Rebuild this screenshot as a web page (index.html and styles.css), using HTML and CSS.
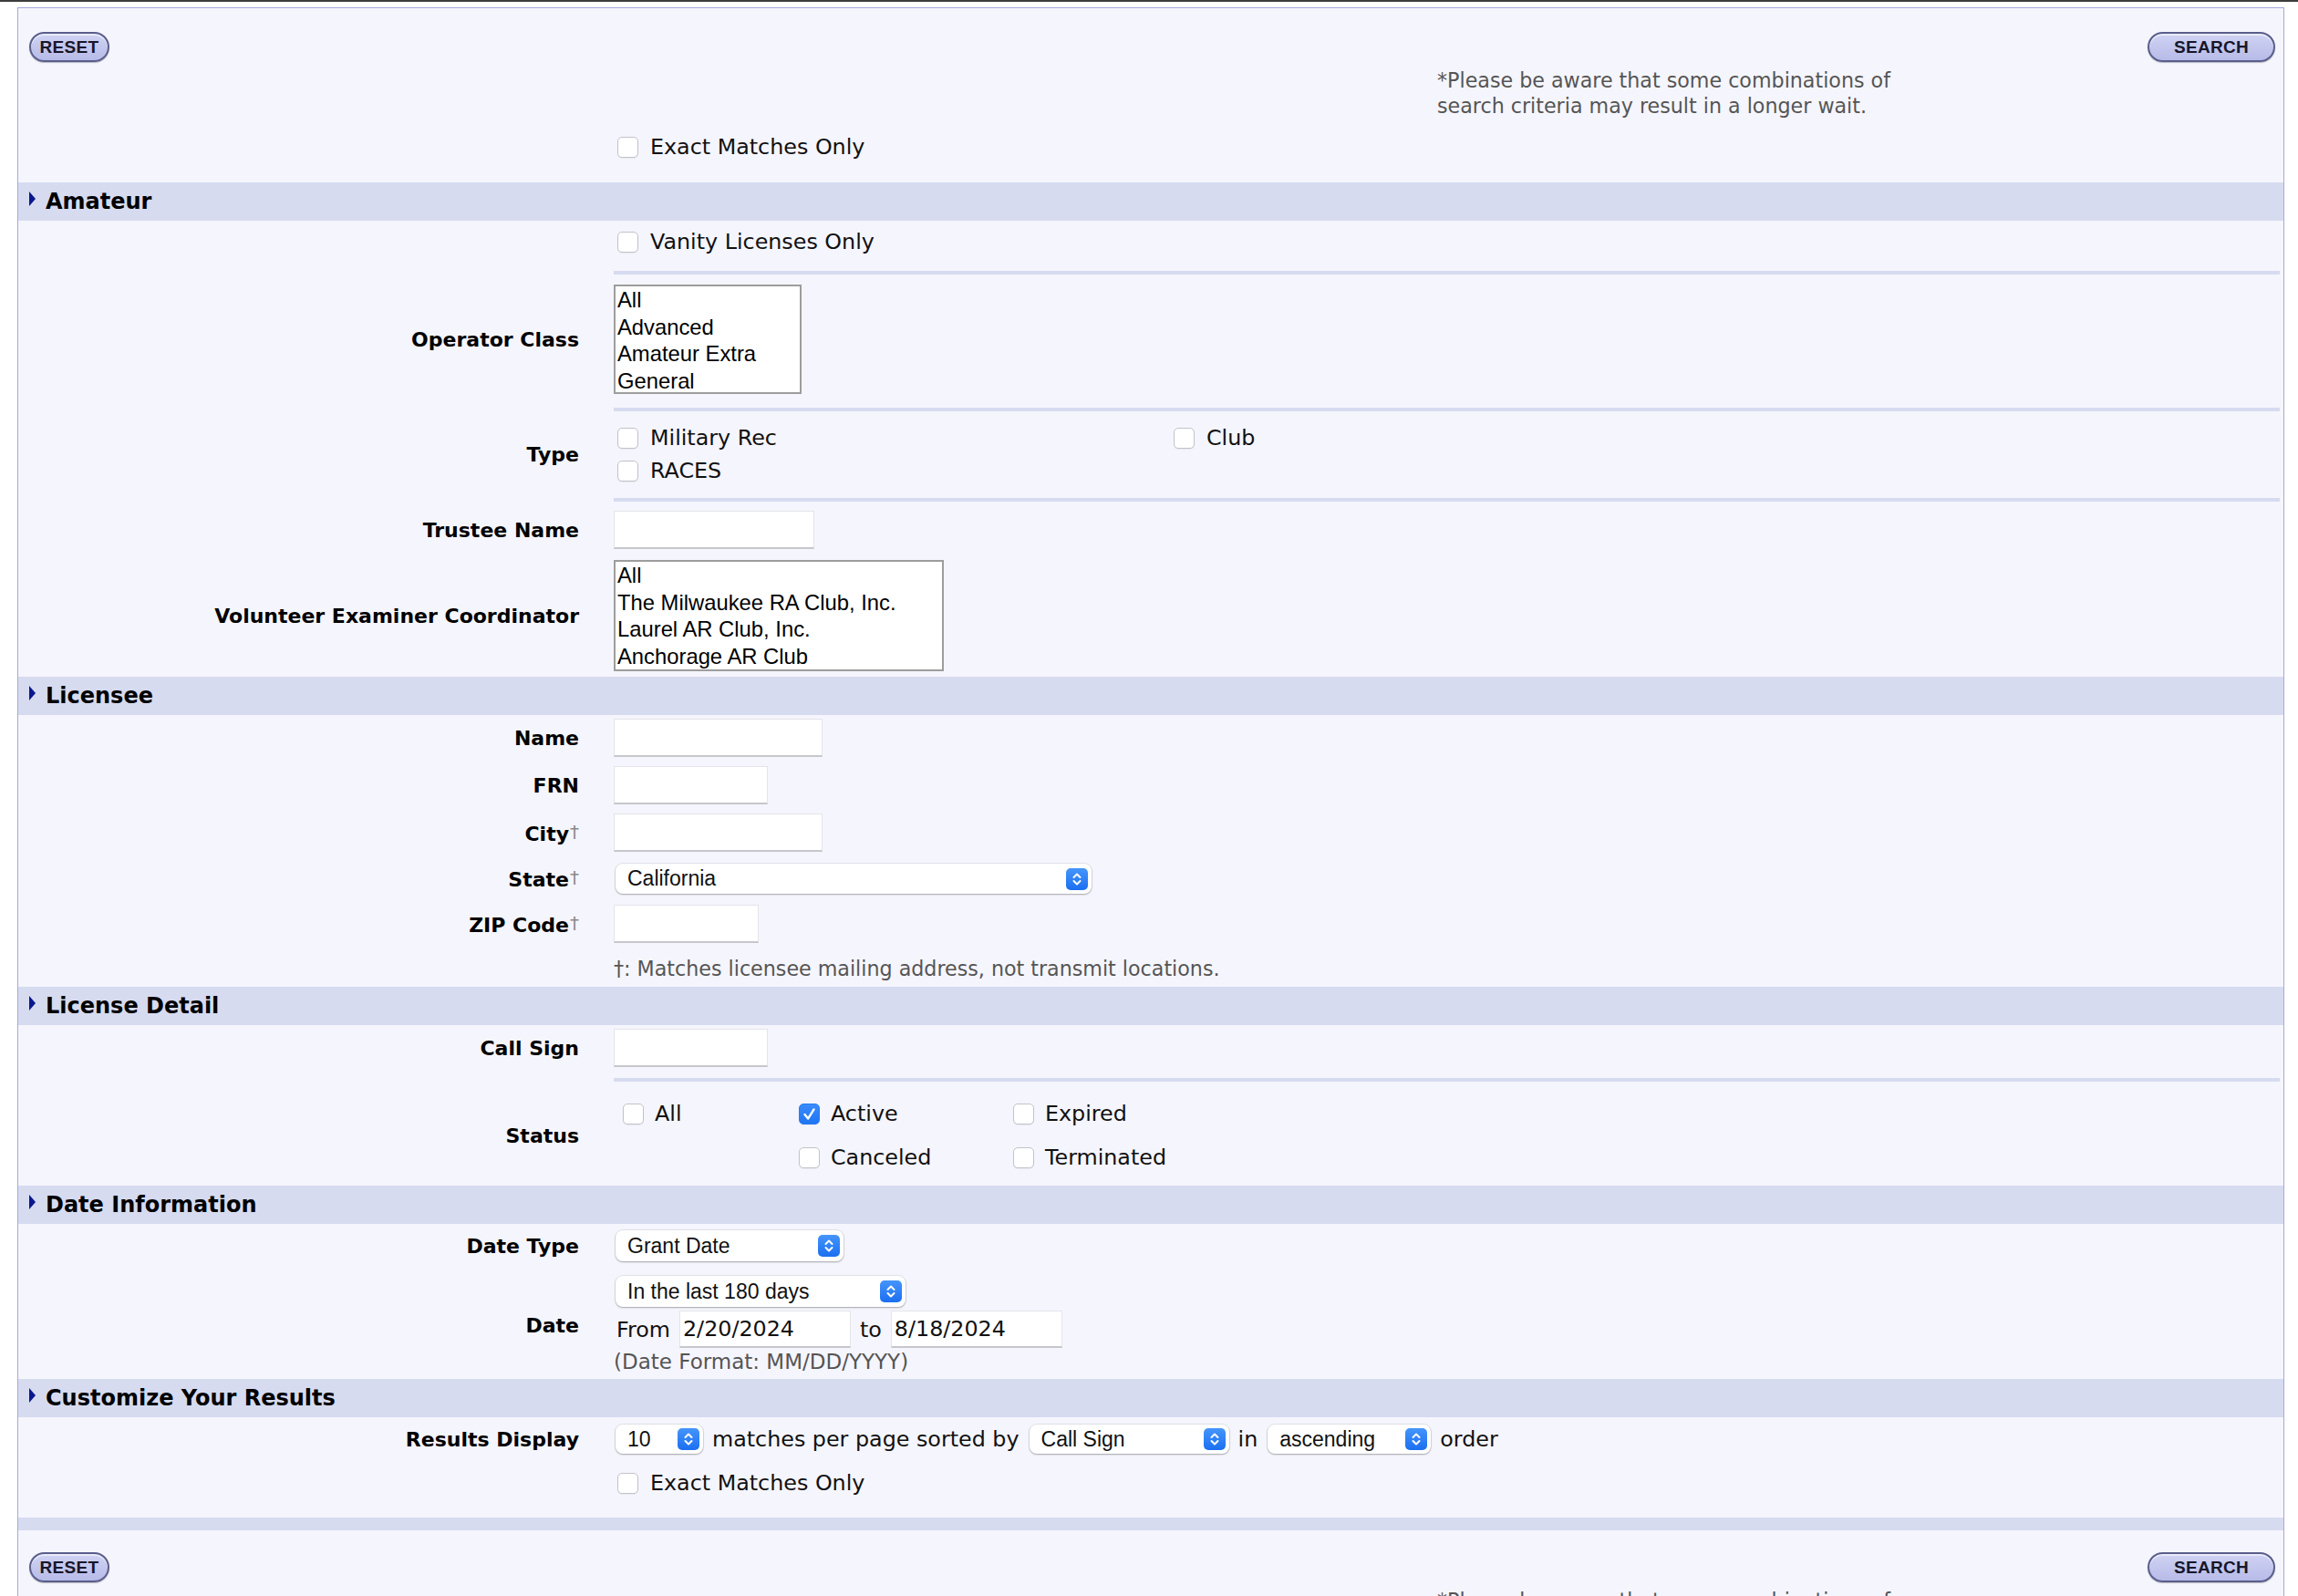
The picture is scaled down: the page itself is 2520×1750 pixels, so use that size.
FILE: index.html
```html
<!DOCTYPE html>
<html>
<head>
<meta charset="utf-8">
<title>License Search</title>
<link rel="stylesheet" href="styles.css">
</head>
<body>
<div class="topline"></div>
<div class="panel">
  <div class="actions">
    <button class="pill reset">RESET</button>
    <button class="pill search">SEARCH</button>
  </div>
  <p class="note">*Please be aware that some combinations of<br>search criteria may result in a longer wait.</p>
  <div class="row h40 mt11">
    <div class="lbl"></div>
    <label class="chk"><span class="cb"></span>Exact Matches Only</label>
  </div>

  <div class="band mt19"><span class="tri"></span>Amateur</div>
  <div class="row h46">
    <div class="lbl"></div>
    <label class="chk"><span class="cb"></span>Vanity Licenses Only</label>
  </div>
  <div class="sep mt9"></div>
  <div class="row mt11">
    <div class="lbl">Operator Class</div>
    <div class="listbox lb-op">
      <div>All</div><div>Advanced</div><div>Amateur Extra</div><div>General</div>
    </div>
  </div>
  <div class="sep mt15"></div>
  <div class="row mt11">
    <div class="lbl">Type</div>
    <div class="type-grid">
      <label class="chk"><span class="cb"></span>Military Rec</label>
      <label class="chk"><span class="cb"></span>Club</label>
      <label class="chk"><span class="cb"></span>RACES</label>
    </div>
  </div>
  <div class="sep mt12"></div>
  <div class="row mt10">
    <div class="lbl">Trustee Name</div>
    <div class="txt w220"></div>
  </div>
  <div class="row mt12">
    <div class="lbl">Volunteer Examiner Coordinator</div>
    <div class="listbox lb-vec">
      <div>All</div><div>The Milwaukee RA Club, Inc.</div><div>Laurel AR Club, Inc.</div><div>Anchorage AR Club</div>
    </div>
  </div>

  <div class="band mt6"><span class="tri"></span>Licensee</div>
  <div class="row mt4">
    <div class="lbl">Name</div>
    <div class="txt w229"></div>
  </div>
  <div class="row mt10">
    <div class="lbl">FRN</div>
    <div class="txt w169"></div>
  </div>
  <div class="row mt10">
    <div class="lbl">City<span class="dag">†</span></div>
    <div class="txt w229"></div>
  </div>
  <div class="row mt13">
    <div class="lbl">State<span class="dag">†</span></div>
    <div class="sel w522"><span>California</span><svg class="step" viewBox="0 0 24 24"><path d="M8.5 10 L12 6.5 L15.5 10 M8.5 14 L12 17.5 L15.5 14"/></svg></div>
  </div>
  <div class="row mt12">
    <div class="lbl">ZIP Code<span class="dag">†</span></div>
    <div class="txt w159"></div>
  </div>
  <div class="row mt14">
    <div class="lbl"></div>
    <div class="hint foot">†: Matches licensee mailing address, not transmit locations.</div>
  </div>

  <div class="band mt6"><span class="tri"></span>License Detail</div>
  <div class="row mt4">
    <div class="lbl">Call Sign</div>
    <div class="txt w169"></div>
  </div>
  <div class="sep mt12"></div>
  <div class="row mt11">
    <div class="lbl">Status</div>
    <div class="status-grid">
      <label class="chk s"><span class="cb"></span>All</label>
      <label class="chk s"><span class="cb on"><svg viewBox="0 0 23 23"><path d="M6 12 L10 17 L17 6"/></svg></span>Active</label>
      <label class="chk s"><span class="cb"></span>Expired</label>
      <span></span>
      <label class="chk s"><span class="cb"></span>Canceled</label>
      <label class="chk s"><span class="cb"></span>Terminated</label>
    </div>
  </div>

  <div class="band mt7"><span class="tri"></span>Date Information</div>
  <div class="row mt7">
    <div class="lbl">Date Type</div>
    <div class="sel w250 h34"><span>Grant Date</span><svg class="step" viewBox="0 0 24 24"><path d="M8.5 10 L12 6.5 L15.5 10 M8.5 14 L12 17.5 L15.5 14"/></svg></div>
  </div>
  <div class="row mt16">
    <div class="lbl">Date</div>
    <div class="datebox">
      <div class="sel w318 h34"><span>In the last 180 days</span><svg class="step" viewBox="0 0 24 24"><path d="M8.5 10 L12 6.5 L15.5 10 M8.5 14 L12 17.5 L15.5 14"/></svg></div>
      <div class="fromto">
        <span class="from">From</span>
        <div class="txt w188 val">2/20/2024</div>
        <span>to</span>
        <div class="txt w188 val">8/18/2024</div>
      </div>
      <div class="hint">(Date Format: MM/DD/YYYY)</div>
    </div>
  </div>

  <div class="band mt5"><span class="tri"></span>Customize Your Results</div>
  <div class="row mt8">
    <div class="lbl">Results Display</div>
    <div class="results">
      <div class="sel w96 h32"><span>10</span><svg class="step" viewBox="0 0 24 24"><path d="M8.5 10 L12 6.5 L15.5 10 M8.5 14 L12 17.5 L15.5 14"/></svg></div>
      <span>matches per page sorted by</span>
      <div class="sel w219 h32 nm"><span>Call Sign</span><svg class="step" viewBox="0 0 24 24"><path d="M8.5 10 L12 6.5 L15.5 10 M8.5 14 L12 17.5 L15.5 14"/></svg></div>
      <span>in</span>
      <div class="sel w179 h32 nm"><span>ascending</span><svg class="step" viewBox="0 0 24 24"><path d="M8.5 10 L12 6.5 L15.5 10 M8.5 14 L12 17.5 L15.5 14"/></svg></div>
      <span>order</span>
    </div>
  </div>
  <div class="row h40 mt12">
    <div class="lbl"></div>
    <label class="chk"><span class="cb"></span>Exact Matches Only</label>
  </div>
  <div class="band thin mt18"></div>

  <div class="actions bottom">
    <button class="pill reset">RESET</button>
    <button class="pill search">SEARCH</button>
  </div>
  <p class="note">*Please be aware that some combinations of<br>search criteria may result in a longer wait.</p>
</div>
</body>
</html>
```
FILE: styles.css
```css
html, body {
  margin: 0;
  padding: 0;
  background: #ffffff;
}
body {
  font-family: "DejaVu Sans", Verdana, sans-serif;
  font-size: 23.8px;
  color: #111;
}
.topline {
  height: 2px;
  background: #3c3c3c;
}
.panel {
  margin: 6px 15px 0 19px;
  border: 1px solid #a4a9dd;
  border-bottom: none;
  background: #f5f5fd;
  padding-bottom: 40px;
}
.actions {
  display: flex;
  justify-content: space-between;
  align-items: flex-start;
  padding: 26px 9px 0 12px;
}
.actions.bottom {
  padding-top: 24px;
}
.pill {
  height: 33px;
  box-sizing: border-box;
  border-radius: 17px;
  border: 2px solid #5a5e8c;
  background: linear-gradient(#d0d3f3, #b7bbe8);
  box-shadow: inset 0 2px 0 rgba(255,255,255,0.55), 0 1px 1px rgba(0,0,0,0.25);
  font-family: "Liberation Sans", Arial, sans-serif;
  font-weight: bold;
  font-size: 19px;
  letter-spacing: 0.3px;
  color: #17172a;
  padding: 0;
  cursor: pointer;
}
.reset { width: 88px; }
.search { width: 140px; }
.note {
  margin: 6px 0 0 1556px;
  font-size: 22.2px;
  line-height: 28px;
  color: #555;
}
.row {
  display: grid;
  grid-template-columns: 615px 1fr;
  column-gap: 38px;
  align-items: center;
}
.h40 { min-height: 40px; }
.h46 { min-height: 46px; }
.mt4 { margin-top: 4px; }
.mt5 { margin-top: 5px; }
.mt6 { margin-top: 6px; }
.mt7 { margin-top: 7px; }
.mt8 { margin-top: 8px; }
.mt9 { margin-top: 9px; }
.mt10 { margin-top: 10px; }
.mt11 { margin-top: 11px; }
.mt12 { margin-top: 12px; }
.mt13 { margin-top: 13px; }
.mt14 { margin-top: 14px; }
.mt15 { margin-top: 15px; }
.mt16 { margin-top: 16px; }
.mt18 { margin-top: 18px; }
.mt19 { margin-top: 19px; }
.lbl {
  text-align: right;
  font-weight: bold;
  font-size: 22px;
  color: #000;
}
.dag {
  font-weight: normal;
  font-size: 20px;
  color: #8a8a8a;
  vertical-align: 3px;
  margin-left: 1px;
}
.band {
  display: flex;
  align-items: center;
  gap: 11px;
  height: 42px;
  background: #d6dbf0;
  padding-left: 12px;
  font-weight: bold;
  font-size: 24px;
  color: #000;
}
.band.thin {
  height: 14px;
}
.tri {
  width: 0;
  height: 0;
  border-top: 8px solid transparent;
  border-bottom: 8px solid transparent;
  border-left: 7px solid #0b178c;
  margin-top: -7px;
}
.sep {
  height: 4px;
  background: #d6dbf0;
  margin-left: 653px;
  margin-right: 4px;
}
.chk {
  display: inline-flex;
  align-items: center;
  gap: 13px;
  margin-left: 4px;
  font-size: 23.8px;
  color: #111;
  white-space: nowrap;
}
.chk.s {
  margin-left: 10px;
  gap: 12px;
}
.cb {
  display: inline-flex;
  align-items: center;
  justify-content: center;
  width: 23px;
  height: 23px;
  box-sizing: border-box;
  border: 1.5px solid #c2c2c9;
  border-radius: 5px;
  background: #fff;
  box-shadow: 0 1px 1px rgba(0,0,0,0.05);
  flex: none;
}
.cb.on {
  background: linear-gradient(#3a8cfb, #1f74f2);
  border-color: #2a7cf3;
}
.cb svg {
  width: 23px;
  height: 23px;
}
.cb svg path {
  fill: none;
  stroke: #fff;
  stroke-width: 2.6;
  stroke-linecap: round;
  stroke-linejoin: round;
}
.type-grid {
  display: grid;
  grid-template-columns: 610px auto;
  grid-auto-rows: 36px;
  align-items: center;
}
.status-grid {
  display: grid;
  grid-template-columns: 193px 235px auto;
  grid-auto-rows: 48px;
  align-items: center;
}
.listbox {
  box-sizing: border-box;
  border: 2px solid #9d9d9d;
  background: #fff;
  font-family: "Liberation Sans", Arial, sans-serif;
  font-size: 23.8px;
  color: #000;
  overflow: hidden;
}
.listbox div {
  height: 29.5px;
  line-height: 29.5px;
  padding-left: 2px;
  white-space: nowrap;
}
.lb-op { width: 206px; height: 120px; }
.lb-vec { width: 362px; height: 122px; }
.txt {
  height: 42px;
  box-sizing: border-box;
  background: #fff;
  border: 1px solid #e4e4ea;
  border-bottom: 2px solid #c6c6cc;
}
.txt.val {
  height: 41px;
  display: flex;
  align-items: center;
  padding-left: 3px;
  font-size: 23.8px;
  color: #111;
}
.w159 { width: 159px; }
.w169 { width: 169px; }
.w188 { width: 188px; }
.w220 { width: 220px; }
.w229 { width: 229px; }
.sel {
  display: flex;
  align-items: center;
  justify-content: space-between;
  box-sizing: border-box;
  height: 33px;
  margin-left: 2px;
  padding: 0 4px 0 13px;
  background: #fff;
  border-radius: 8px;
  box-shadow: 0 0 0 1px rgba(0,0,0,0.07), 0 1px 2px rgba(0,0,0,0.28);
  font-family: "Liberation Sans", Arial, sans-serif;
  font-size: 23px;
  color: #111;
  white-space: nowrap;
}
.sel.nm { margin-left: 1px; }
.h32 { height: 32px; }
.h34 { height: 34px; }
.w96 { width: 96px; }
.w179 { width: 179px; }
.w219 { width: 219px; }
.w250 { width: 250px; }
.w318 { width: 318px; }
.w522 { width: 522px; }
.step {
  width: 24px;
  height: 24px;
  flex: none;
  border-radius: 5px;
  background: linear-gradient(#4595fb, #1b6ff0);
}
.step path {
  fill: none;
  stroke: #fff;
  stroke-width: 2;
  stroke-linecap: round;
  stroke-linejoin: round;
}
.hint {
  font-size: 23px;
  line-height: 28px;
  color: #555;
}
.hint.foot {
  font-size: 22.2px;
}
.datebox {
  display: flex;
  flex-direction: column;
  align-items: flex-start;
}
.fromto {
  display: flex;
  align-items: center;
  gap: 10px;
  margin-top: 4px;
}
.from {
  margin-left: 3px;
}
.datebox .hint {
  margin-top: 1px;
}
.results {
  display: flex;
  align-items: center;
  gap: 10px;
  white-space: nowrap;
}
```
